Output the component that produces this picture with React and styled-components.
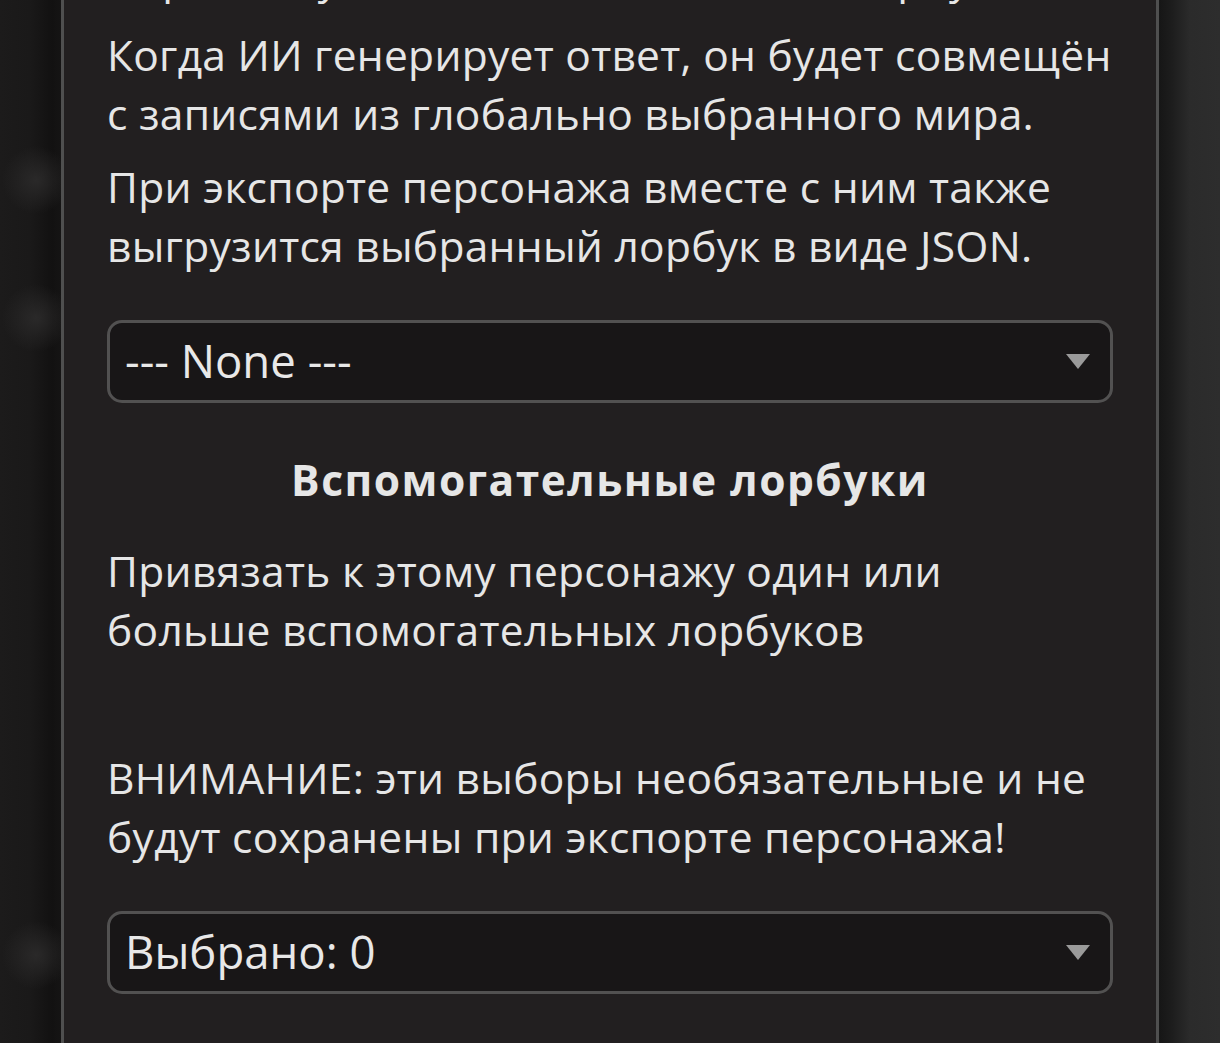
import React from "react";
import styled, { createGlobalStyle } from "styled-components";

const Global = createGlobalStyle`
  html, body {
    margin: 0;
    padding: 0;
    height: 1043px;
    overflow: hidden;
  }
  body {
    font-family: "Open Sans", "Noto Sans", sans-serif;
    background-color: #1b1a1a;
    background-image:
      radial-gradient(circle at 36px 180px, #2a2929 0, rgba(42,41,41,0) 34px),
      radial-gradient(circle at 36px 318px, #2a2929 0, rgba(42,41,41,0) 34px),
      radial-gradient(circle at 36px 955px, #2a2929 0, rgba(42,41,41,0) 34px),
      linear-gradient(90deg, #1c1b1b 0, #1a1919 30px, #121111 52px, #151414 61px, transparent 61px,
        transparent 1159px, #161616 1159px, #1d1d1d 1172px, #2b2b2b 1190px, #2d2d2d 1220px);
  }
`;

const Page = styled.div`
  display: flex;
  justify-content: center;
  height: 1043px;
`;

const Dialog = styled.section`
  box-sizing: border-box;
  width: 1098px;
  height: 100%;
  overflow: hidden;
  background: #221f20;
  border-left: 3px solid #4f4f4f;
  border-right: 3px solid #4f4f4f;
  padding: 0 43px;
  color: #e6e6e6;
`;

const Content = styled.div`
  display: flex;
  flex-direction: column;
  margin-top: -52px;
`;

const Para = styled.div`
  font-size: 42.5px;
  letter-spacing: 0.28px;
  line-height: 59px;
  margin-bottom: ${(p) => p.$gap || 0}px;
`;

const Heading = styled.h4`
  margin: 0 0 ${(p) => p.$gap || 0}px;
  font-size: 42.5px;
  line-height: 59px;
  font-weight: 700;
  letter-spacing: 1.5px;
  text-align: center;
`;

const SelectBox = styled.div`
  box-sizing: border-box;
  height: 83px;
  display: flex;
  align-items: center;
  justify-content: space-between;
  padding: 0 20px 0 15px;
  background: #181617;
  border: 3px solid #525151;
  border-radius: 15px;
  font-size: 45.5px;
  line-height: 1;
  color: #e8e8e8;
  margin-bottom: ${(p) => p.$gap || 0}px;
`;

const Arrow = styled.svg`
  width: 24px;
  height: 15px;
  flex: none;
`;

function Select({ value, gap }) {
  return (
    <SelectBox role="combobox" $gap={gap}>
      <span>{value}</span>
      <Arrow viewBox="0 0 24 15">
        <polygon points="0,0 24,0 12,15" fill="#9a9a9a" />
      </Arrow>
    </SelectBox>
  );
}

export default function App() {
  return (
    <>
      <Global />
      <Page>
        <Dialog>
          <Content>
            <Para $gap={18}>Персонажу можно назначить свой лорбук.</Para>
            <Para $gap={14}>
              Когда ИИ генерирует ответ, он будет совмещён с записями из глобально выбранного мира.
            </Para>
            <Para $gap={44.5}>
              При экспорте персонажа вместе с ним также выгрузится выбранный лорбук в виде JSON.
            </Para>
            <Select value="--- None ---" gap={47.5} />
            <Heading $gap={32}>Вспомогательные лорбуки</Heading>
            <Para $gap={89}>
              Привязать к этому персонажу один или больше вспомогательных лорбуков
            </Para>
            <Para $gap={44.5}>
              ВНИМАНИЕ: эти выборы необязательные и не будут сохранены при экспорте персонажа!
            </Para>
            <Select value="Выбрано: 0" />
          </Content>
        </Dialog>
      </Page>
    </>
  );
}
